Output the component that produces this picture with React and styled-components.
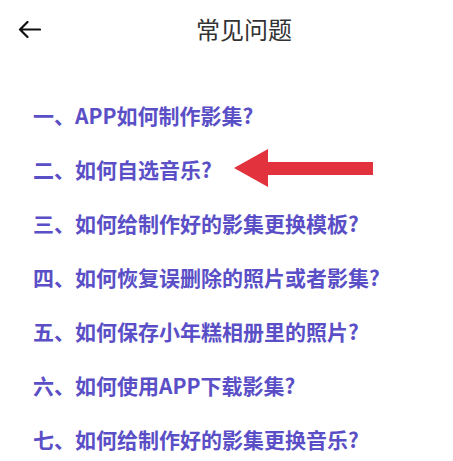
import styled, { createGlobalStyle } from "styled-components";

const GlobalStyle = createGlobalStyle`
  body {
    margin: 0;
    background: #ffffff;
    font-family: "Noto Sans CJK SC", "Noto Sans", sans-serif;
  }
`;

const Page = styled.div`
  width: 453px;
  height: 461px;
  overflow: hidden;
  background: #ffffff;
`;

const Header = styled.div`
  display: flex;
  align-items: center;
  height: 58px;
  padding: 0 23px 0 18px;
`;

const BackButton = styled.div`
  width: 40px;
  height: 58px;
  display: flex;
  align-items: center;
  color: #111;
`;

const Title = styled.h1`
  flex: 1;
  margin: 0;
  text-align: center;
  font-size: 24px;
  font-weight: 400;
  color: #333333;
  line-height: 58px;
`;

const List = styled.div`
  display: flex;
  flex-direction: column;
  padding: 30px 0 0 33px;
`;

const Row = styled.div`
  position: relative;
  height: 54px;
  display: flex;
  align-items: center;
  font-size: 21px;
  font-weight: 700;
  color: #5a4fc6;
  white-space: nowrap;
`;

const Pointer = styled.svg`
  position: absolute;
  left: 201px;
  top: 6px;
`;

const questions = [
  "一、APP如何制作影集?",
  "二、如何自选音乐?",
  "三、如何给制作好的影集更换模板?",
  "四、如何恢复误删除的照片或者影集?",
  "五、如何保存小年糕相册里的照片?",
  "六、如何使用APP下载影集?",
  "七、如何给制作好的影集更换音乐?",
];

const App = () => {
  return (
    <Page>
      <GlobalStyle />
      <Header>
        <BackButton>
          <svg width="23" height="17" viewBox="0 0 23 17" fill="none">
            <path
              d="M22 8.5H2M9.5 1L2 8.5L9.5 16"
              stroke="currentColor"
              strokeWidth="2.2"
              strokeLinecap="round"
              strokeLinejoin="round"
            />
          </svg>
        </BackButton>
        <Title>常见问题</Title>
      </Header>
      <List>
        {questions.map((q, i) => (
          <Row key={q}>
            {q}
            {i === 1 && (
              <Pointer width="140" height="40" viewBox="0 0 140 40">
                <polygon
                  points="0,20 34,1 34,14 139,14 139,27 34,27 34,39"
                  fill="#e1323e"
                />
              </Pointer>
            )}
          </Row>
        ))}
      </List>
    </Page>
  );
};

export default App;
